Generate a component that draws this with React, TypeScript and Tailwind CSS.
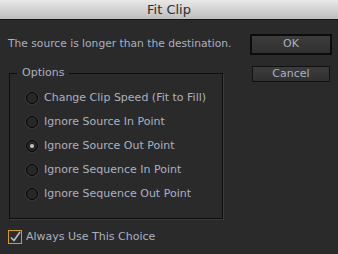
const OPTIONS = [
  { label: "Change Clip Speed (Fit to Fill)", checked: false },
  { label: "Ignore Source In Point", checked: false },
  { label: "Ignore Source Out Point", checked: true },
  { label: "Ignore Sequence In Point", checked: false },
  { label: "Ignore Sequence Out Point", checked: false },
];

const FONT = "font-['DejaVu_Sans',sans-serif]";

function Radio({ checked }: { checked: boolean }) {
  return (
    <span className="w-[12px] h-[12px] rounded-full border border-[#050505] bg-[#272727] shadow-[0_0_0_1px_#363636] flex items-center justify-center shrink-0">
      {checked && <span className="w-[4px] h-[4px] rounded-full bg-[#c4c4c4]" />}
    </span>
  );
}

export default function App() {
  return (
    <div className={`w-[338px] h-[254px] bg-[#2a2a2a] overflow-hidden ${FONT}`}>
      {/* Title bar */}
      <div className="h-[20px] bg-gradient-to-b from-[#e9e9e9] to-[#bdbdbd] border-b border-[#151515] flex items-center justify-center">
        <span className="text-[13px] text-[#2e2e2e] leading-none">Fit Clip</span>
      </div>

      <div className="flex">
        {/* Left column */}
        <div className="w-[240px] pl-[8px] pt-[17px]">
          <p className="text-[10.7px] leading-[14px] text-[#abb1c0] whitespace-nowrap">
            The source is longer than the destination.
          </p>

          <fieldset className="mt-[15px] ml-[1px] w-[212px] border border-[#0e0e0e] shadow-[1px_1px_0_#3c3c3c] px-[16px] pt-[6px] pb-[12px]">
            <legend className="ml-[-9px] px-[5px] text-[11px] leading-[14px] text-[#abb1c0]">Options</legend>
            {OPTIONS.map((o) => (
              <div key={o.label} className="h-[24px] flex items-center gap-[6px]">
                <Radio checked={o.checked} />
                <span className="text-[11px] text-[#abb1c0] whitespace-nowrap">{o.label}</span>
              </div>
            ))}
          </fieldset>

          <div className="mt-[11px] h-[14px] flex items-center gap-[4px]">
            <span className="w-[14px] h-[14px] border border-[#d99a18] bg-[#2c2c2c] flex items-center justify-center shrink-0">
              <svg width="12" height="12" viewBox="0 0 12 12">
                <path d="M2 6.5 L5 9.5 L11 1" fill="none" stroke="#b9bec6" strokeWidth="1.6" />
              </svg>
            </span>
            <span className="text-[11px] text-[#abb1c0] whitespace-nowrap">Always Use This Choice</span>
          </div>
        </div>

        {/* Right column */}
        <div className="flex-1 pt-[14px] pl-[10px] flex flex-col gap-[11px]">
          <button className="w-[82px] h-[21px] border-2 border-[#0c0c0c] bg-gradient-to-b from-[#3c3c3c] to-[#303030] text-[11px] text-[#abb1c0] flex items-center justify-center">
            OK
          </button>
          <button className="ml-[2px] w-[78px] h-[16px] border border-[#111] bg-gradient-to-b from-[#3c3c3c] to-[#303030] text-[11px] text-[#abb1c0] flex items-center justify-center">
            Cancel
          </button>
        </div>
      </div>
    </div>
  );
}
